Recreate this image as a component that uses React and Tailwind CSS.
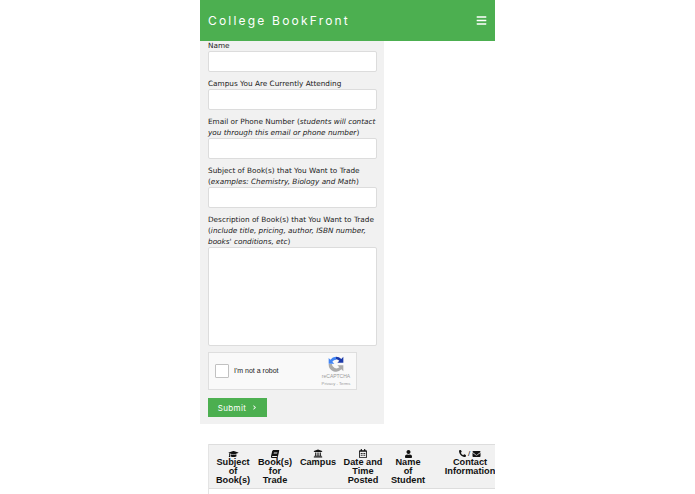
import React from 'react';
import { FaBars, FaBook, FaChevronRight, FaEnvelope, FaGraduationCap, FaPhoneAlt, FaRegCalendarAlt, FaUniversity, FaUser } from 'react-icons/fa';

const Field = ({ label, className = "h-[21px]" }) => (
  <div className="flex flex-col">
    <label className="text-[7.300px] leading-[11px] text-[#222] whitespace-nowrap font-['DejaVu_Sans',sans-serif]">{label}</label>
    <div className={`bg-white border border-[#dcdcdc] rounded-[2px] ${className}`} />
  </div>
);

const RecaptchaLogo = () => (
  <svg viewBox="0 0 24 24" className="w-[16px] h-[16px]">
    <path d="M12 1a11 11 0 0 1 8 3.4L23 1v9h-9l3-3a7 7 0 0 0-5-2.200z" fill="#1c3aa9" />
    <path d="M12 1v4.800A7 7 0 0 0 6.500 8.500L9.500 11.500H1V3l2.600 2.500A11 11 0 0 1 12 1z" fill="#4285f4" />
    <path d="M1 12h4.800a7 7 0 0 0 11.300 5l-3-3h8.900v9l-2.900-3A11 11 0 0 1 1 12z" fill="#ababab" />
  </svg>
);

const Head = ({ icon, children, className = "" }) => (
  <div className={`flex flex-col items-center shrink-0 ${className}`}>
    <div className="h-[9px] flex items-center gap-[2px] text-[8px] font-normal text-[#111]">{icon}</div>
    <div className="leading-[9px] whitespace-nowrap">{children}</div>
  </div>
);

export default function App() {
  return (
    <div className="w-[695px] h-[494px] overflow-hidden bg-white pl-[200px] font-['Inter','Liberation_Sans',sans-serif]">
      <div className="w-[295px]">
        <header className="relative z-10 h-[41px] bg-[#4caf50] flex items-center justify-between pl-2 pr-[8px] text-white">
          <span className="text-[12px] tracking-[2.200px]">College BookFront</span>
          <FaBars className="w-[11px] h-[11px]" />
        </header>

        <form className="w-[184px] h-[383px] bg-[#f1f1f1] px-2 flex flex-col">
          <div className="-mt-px flex flex-col gap-[6px] w-[169px]">
            <Field label="Name" />
            <Field label="Campus You Are Currently Attending" />
            <Field label={<>Email or Phone Number (<i>students will contact</i><br /><i>you through this email or phone number</i>)</>} />
            <Field label={<>Subject of Book(s) that You Want to Trade<br />(<i>examples: Chemistry, Biology and Math</i>)</>} />
            <Field label={<>Description of Book(s) that You Want to Trade<br />(<i>include title, pricing, author, ISBN number,</i><br /><i>books' conditions, etc</i>)</>} className="h-[99px]" />
          </div>

          <div className="mt-[6px] w-[149px] h-[38px] bg-[#f9f9f9] border border-[#dedede] flex items-center pl-[6px] pr-[6px]">
            <div className="w-[14px] h-[14px] bg-white border border-[#c1c1c1] rounded-[1px]" />
            <span className="ml-[5px] text-[7px] text-[#222] font-['Liberation_Sans',sans-serif]">I'm not a robot</span>
            <div className="ml-auto w-[28px] flex flex-col items-center text-[#9b9b9b] whitespace-nowrap font-['Liberation_Sans',sans-serif]">
              <RecaptchaLogo />
              <span className="text-[5px] leading-[7px] mt-[1px]">reCAPTCHA</span>
              <span className="text-[4.200px] leading-[7px]">Privacy - Terms</span>
            </div>
          </div>

          <button type="button" className="mt-2 w-[59px] h-[19px] bg-[#4caf50] text-white text-[8px] tracking-[0.4px] flex items-center justify-center gap-[6px]">
            Submit <FaChevronRight className="w-[5px] h-[5px]" />
          </button>
        </form>

        <div className="mt-5 ml-2 w-[287px] h-[50px] overflow-hidden border-l border-[#e4e4e4]">
          <div className="h-[45px] w-[300px] bg-[#f1f1f1] border-t border-b border-[#ddd] flex items-start pt-[4px] text-[9.200px] font-bold text-center text-[#111] font-['Liberation_Sans',sans-serif]">
            <Head className="w-[48px]" icon={<FaGraduationCap className="w-[11px] h-[8px]" />}>Subject<br />of<br />Book(s)</Head>
            <Head className="w-[36px]" icon={<FaBook className="w-[8px] h-[8px] -skew-x-12" />}>Book(s)<br />for<br />Trade</Head>
            <Head className="w-[50px]" icon={<FaUniversity className="w-[10px] h-[9px]" />}>Campus</Head>
            <Head className="w-[40px]" icon={<FaRegCalendarAlt className="w-[8px] h-[9px]" />}>Date and<br />Time<br />Posted</Head>
            <Head className="w-[50px]" icon={<FaUser className="w-[7px] h-[8px]" />}>Name<br />of<br />Student</Head>
            <Head className="w-[74px]" icon={<><FaPhoneAlt className="w-[7px] h-[7px]" /><span>/</span><FaEnvelope className="w-[9px] h-[8px]" /></>}>Contact<br />Information</Head>
          </div>
        </div>
      </div>
    </div>
  );
}
